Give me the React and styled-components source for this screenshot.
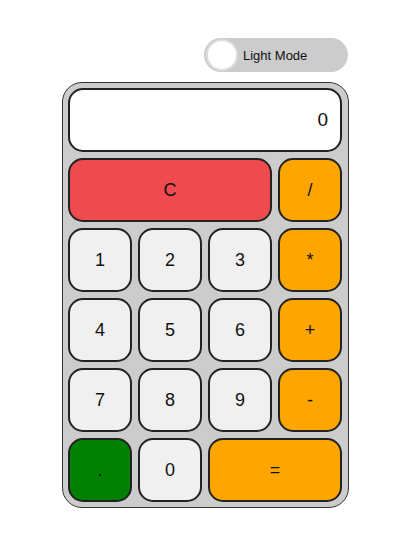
import React, { useState } from 'react';
import styled, { createGlobalStyle } from 'styled-components';

const GlobalStyle = createGlobalStyle`
  body {
    margin: 0;
    background: #ffffff;
    font-family: "Liberation Sans", Arial, sans-serif;
  }
`;

const Page = styled.div`
  display: flex;
  flex-direction: column;
  align-items: center;
  padding-top: 38px;
`;

const TopBar = styled.div`
  width: 287px;
  display: flex;
  justify-content: flex-end;
  margin-bottom: 10px;
`;

const Toggle = styled.button`
  width: 144px;
  height: 34px;
  display: flex;
  align-items: center;
  gap: 5px;
  padding: 0 2px;
  margin-right: 1px;
  border: none;
  border-radius: 17px;
  background-color: #cccccc;
  font-family: "Liberation Sans", Arial, sans-serif;
  font-size: 13px;
  color: #111;
  cursor: pointer;
`;

const Knob = styled.span`
  width: 28px;
  height: 28px;
  border-radius: 50%;
  background: #ffffff;
  border: 2px solid #dddddd;
  flex-shrink: 0;
`;

const Calculator = styled.div`
  box-sizing: border-box;
  width: 287px;
  padding: 5px;
  border: 1px solid #333;
  border-radius: 20px;
  background-color: #cccccc;
  display: grid;
  grid-template-columns: repeat(4, 64px);
  grid-auto-rows: 64px;
  gap: 6px;
`;

const Display = styled.div`
  grid-column: span 4;
  box-sizing: border-box;
  background: #ffffff;
  border: 2px solid #222;
  border-radius: 15px;
  display: flex;
  align-items: center;
  justify-content: flex-end;
  padding-right: 12px;
  font-size: 19px;
  color: #111;
`;

const colors = {
  num: '#f0f0f0',
  op: '#ffa500',
  clear: '#ef4a4d',
  dot: '#008000',
};

const Key = styled.button`
  grid-column: span ${(p) => p.$span || 1};
  box-sizing: border-box;
  border: 2px solid #222;
  border-radius: 15px;
  background-color: ${(p) => colors[p.$kind] || colors.num};
  font-family: "Liberation Sans", Arial, sans-serif;
  font-size: 18px;
  color: #111;
  cursor: pointer;
  padding: 0;
`;

const keys = [
  { label: 'C', kind: 'clear', span: 3 },
  { label: '/', kind: 'op' },
  { label: '1' }, { label: '2' }, { label: '3' }, { label: '*', kind: 'op' },
  { label: '4' }, { label: '5' }, { label: '6' }, { label: '+', kind: 'op' },
  { label: '7' }, { label: '8' }, { label: '9' }, { label: '-', kind: 'op' },
  { label: '.', kind: 'dot' }, { label: '0' }, { label: '=', kind: 'op', span: 2 },
];

const App = () => {
  const [value] = useState('0');

  return (
    <>
      <GlobalStyle />
      <Page>
        <TopBar>
          <Toggle>
            <Knob />
            Light Mode
          </Toggle>
        </TopBar>
        <Calculator>
          <Display>{value}</Display>
          {keys.map((k) => (
            <Key key={k.label} $kind={k.kind} $span={k.span}>
              {k.label}
            </Key>
          ))}
        </Calculator>
      </Page>
    </>
  );
};

export default App;
